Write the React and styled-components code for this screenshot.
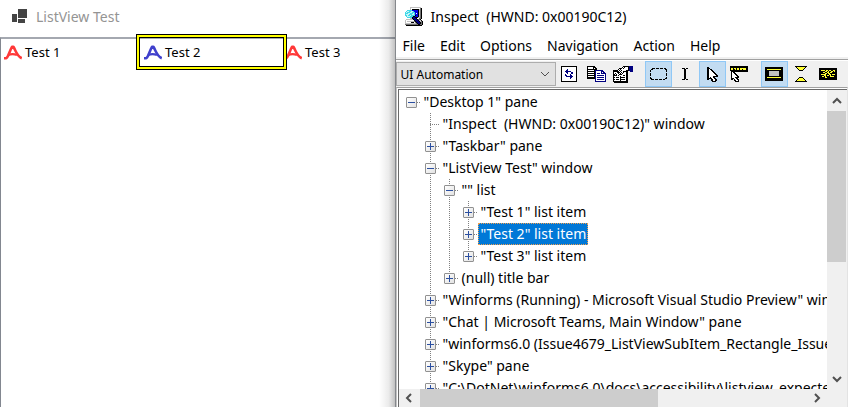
import React from "react";
import styled, { createGlobalStyle, css } from "styled-components";

const GlobalStyle = createGlobalStyle`
  * { box-sizing: border-box; }
  body { margin: 0; background: #fff; font-family: "Noto Sans", "Open Sans", sans-serif; font-size: 14px; color: #000; }
  button, select { font: inherit; color: inherit; border: 0; margin: 0; padding: 0; background: none; border-radius: 0; }
  ul { list-style: none; margin: 0; padding: 0; }
  h1 { margin: 0; font-size: inherit; font-weight: 400; }
`;

const Desktop = styled.main`
  display: flex;
  height: 100vh;
  padding-bottom: 7px;
  overflow: hidden;
`;

/* ---------- ListView window ---------- */

const ListWindow = styled.section`
  flex: 395 1 0;
  min-width: 0;
  display: flex;
  flex-direction: column;
  position: relative;
  &::after {
    content: "";
    position: absolute;
    inset: 0 0 0 auto;
    width: 16px;
    background: linear-gradient(to right, transparent, rgba(0, 0, 0, 0.08) 60%, rgba(0, 0, 0, 0.24));
    pointer-events: none;
  }
`;

const ListTitle = styled.header`
  height: 37px;
  padding: 0 0 4px 12px;
  display: flex;
  align-items: center;
  gap: 8px;
  color: #949494;
`;

const ListBody = styled.ul`
  flex: 1;
  border-top: 2px solid #a4a8b0;
  border-left: 1px solid #828790;
  padding-left: 3px;
  display: grid;
  grid-template-columns: 140px 140px auto;
  align-content: start;
  justify-content: start;
`;

const ListItem = styled.li`
  position: relative;
  display: flex;
  align-items: center;
  gap: 3px;
  height: 26px;
  font-size: 13px;
  white-space: nowrap;
  z-index: ${(p) => (p.$raised ? 1 : 0)};
`;

const HighlightFrame = styled.span`
  position: absolute;
  top: -5px;
  left: -8px;
  width: 151px;
  height: 36px;
  border: 1px solid #000;
  pointer-events: none;
  &::before {
    content: "";
    position: absolute;
    inset: 0;
    border: 2px solid #ff0;
  }
  &::after {
    content: "";
    position: absolute;
    inset: 2px;
    border: 1px solid #000;
  }
`;

/* ---------- Inspect window ---------- */

const InspectWindow = styled.section`
  flex: 453 1 0;
  min-width: 0;
  display: flex;
  flex-direction: column;
  border-left: 1px solid #85888c;
  background: #fff;
`;

const InspectTitle = styled.header`
  height: 32px;
  padding-left: 8px;
  display: flex;
  align-items: center;
  gap: 7px;
  white-space: pre;
`;

const MenuBar = styled.nav`
  height: 27px;
  padding: 2px 0 0 7px;
  display: flex;
  gap: 15px;
  align-items: center;
  border-bottom: 2px solid #f0f0f0;
`;

const ToolBar = styled.div`
  height: 28px;
  display: flex;
  align-items: center;
  background: #f0f0f0;
  border-top: 1px solid #a0a0a0;
  box-shadow: inset 0 1px #fff;
  padding-top: 1px;
`;

const ComboWrap = styled.div`
  width: 160px;
  height: 24px;
  border: 1px solid #adadad;
  background: #e1e1e1;
  display: flex;
  align-items: center;
  svg { margin-left: -16px; pointer-events: none; }
`;

const Combo = styled.select`
  appearance: none;
  width: 100%;
  height: 22px;
  padding-left: 4px;
  font-size: 12px;
`;

const ToolGroup = styled.div`
  display: flex;
  margin-right: 8px;
  &:last-child { margin-right: 0; }
`;

const ToolButton = styled.button`
  width: 27px;
  height: 26px;
  display: flex;
  align-items: center;
  justify-content: center;
  ${(p) => p.$active && css`
    background: #c2dcf2;
    border: 1px solid #90c8f6;
  `}
`;

const TreeFrame = styled.div`
  flex: 1;
  min-height: 0;
  border-top: 1px solid #a0a0a0;
  border-left: 1px solid #c4c4c4;
  border-right: 1px solid #e3e3e3;
  padding: 1px 0 0 1px;
  display: flex;
`;

const TreeGrid = styled.div`
  flex: 1;
  min-width: 0;
  border-top: 1px solid #696969;
  border-left: 1px solid #696969;
  display: grid;
  grid-template: minmax(0, 1fr) 18px / minmax(0, 1fr) 20px;
  background: #f0f0f0;
`;

const Tree = styled.ul`
  background: #fff;
  overflow: hidden;
  padding: 1px 0 0 3px;
`;

const TreeRow = styled.li`
  height: 22px;
  display: flex;
  align-items: center;
  white-space: pre;
`;

const dots = (dir) =>
  `repeating-linear-gradient(to ${dir}, #808080 0 1px, transparent 1px 2px)`;

const Guide = styled.span`
  flex: none;
  width: 19px;
  height: 22px;
  display: flex;
  align-items: center;
  padding-left: 4px;
  background-image:
    ${(p) => (p.$line === "none" ? "none" : dots("bottom"))},
    ${(p) => (p.$branch ? dots("right") : "none")};
  background-repeat: no-repeat;
  background-position: 9px 0, 9px 11px;
  background-size: 1px ${(p) => (p.$line === "end" ? "12px" : "22px")}, 10px 1px;
`;

const Toggle = styled.button`
  width: 11px;
  height: 11px;
  border: 1px solid #919191;
  border-radius: 1px;
  background: linear-gradient(135deg, #fff, #e2e2e2);
  display: flex;
`;

const NodeLabel = styled.span`
  height: 22px;
  line-height: 20px;
  border: 1px dotted transparent;
  padding: 0 1px 0 2px;
  ${(p) => p.$selected && css`
    background: #0078d7;
    color: #fff;
    border-color: #f0a050;
  `}
`;

const ScrollTrack = styled.div`
  display: flex;
  flex-direction: ${(p) => (p.$vertical ? "column" : "row")};
  background: #f0f0f0;
`;

const ScrollButton = styled.button`
  flex: none;
  width: 21px;
  height: 18px;
  display: flex;
  align-items: center;
  justify-content: center;
  ${(p) => p.$vertical && css`
    width: 19px;
    height: 21px;
  `}
`;

const ScrollThumb = styled.div`
  background: #cdcdcd;
  flex: ${(p) => p.$size} 1 0;
  ${(p) => p.$vertical && "width: 19px;"}
`;

const ScrollSpace = styled.div`
  flex: ${(p) => p.$size} 1 0;
`;

/* ---------- Icons ---------- */

const palette = { k: "#000", n: "#000080", w: "#fff", y: "#ffff30", g: "#c0c0c0", s: "#707070", b: "#0000e0", c: "#40d8e8", l: "#c8f4f8" };

function PixelIcon({ rows }) {
  const width = Math.max(...rows.map((r) => r.length));
  const runs = [];
  rows.forEach((row, y) => {
    for (let x = 0; x < row.length; ) {
      let end = x + 1;
      while (row[end] === row[x]) end++;
      if (palette[row[x]]) runs.push([x, y, end - x, palette[row[x]]]);
      x = end;
    }
  });
  return (
    <svg width={width} height={rows.length} shapeRendering="crispEdges" aria-hidden="true">
      {runs.map(([x, y, w, fill]) => (
        <rect key={`${x}-${y}`} x={x} y={y} width={w} height="1" fill={fill} />
      ))}
    </svg>
  );
}

const bitmaps = {
  inspect: [
    "......ggggggggggg...",
    "......gwwwwwwwwwsk..",
    "......gwkkkkkkkgsk..",
    "...cccccbbbbbbkgsk..",
    "..cllccllcbbbbkgsk..",
    ".clcccllcccbbbkgsk..",
    ".cccllccclcbwbkgsk..",
    ".clllcccllcbbbkgsk..",
    ".cclcclcccckbbkgsk..",
    "..clllccckkbbbkgsk..",
    "...cccccknnkkkggsk..",
    "......ggknnnkwwssk..",
    "..gggggggknnnkssk...",
    ".gwwwwwwwwknnnkggk..",
    ".gwgggggggsknnnkgsk.",
    ".gwwwwwkkkwsknnnksk.",
    ".gggggggggggsknnksk.",
    ".ssssssssssssskkssk.",
    "..kkkkkkkkkkkkkkkk..",
  ],
  refresh: [
    "kkkkkkkkkkkkkkkk",
    "kwwwwwwwwwwwwwwk",
    "kwwwwwwwwwwwwwwk",
    "kwwwwwnwwwwwwwwk",
    "kwwwwnnwwwwwwwwk",
    "kwwwnnnnnnwwwwwk",
    "kwwwwnnwwwnnwwwk",
    "kwwwwwnwwwnnwwwk",
    "kwwwnwwwwnwwwwwk",
    "kwwwnnwwwnnwwwwk",
    "kwwwwnnnnnnnwwwk",
    "kwwwwwwwwnnwwwwk",
    "kwwwwwwwwnwwwwwk",
    "kwwwwwwwwwwwwwwk",
    "kwwwwwwwwwwwwwwk",
    "kkkkkkkkkkkkkkkk",
  ],
  copy: [
    "kkkkkkkk...........",
    "kwwwwwkkk..........",
    "kwwwwwkwkk.........",
    "kkkkkkkkkk.........",
    "kwwwwwwknnnnnnnn...",
    "kkkkkkkknwwwwwnnn..",
    "kwwwwwwknwwwwwnwnn.",
    "kkkkkkkknwnnnwnnnnn",
    "kwwwwwwknwwwwwwwwwn",
    "kkkkkkkknwnnnnnnnwn",
    "kwwwwwwknwwwwwwwwwn",
    "kkkkkkkknwnnnnnnnwn",
    "kkkkkkkknwwwwwwwwwn",
    "........nwnnnnnnnwn",
    "........nwwwwwwwwwn",
    "........nnnnnnnnnnn",
  ],
  properties: [
    "..........kkkkkknnnn",
    ".........kwkwwwknnnn",
    "......kkkwkwwwwknnnn",
    ".....kwkwwwwwwwknnnn",
    "kkkkkwkwkwwwwkkknnnn",
    "kkkkkkwkwwkkkkk..nnn",
    "kwwwkkkwkwkwwkk.....",
    "kwkwwkwkwkwwwkk.....",
    "kkwkwwkkkwwwwkk.....",
    "kkkkwkwwwwkkwkk.....",
    "kwwwwwwkwwwwwkk.....",
    "kkwkkkwkkkkkwkk.....",
    "kwwwwwwkwwwwwkk.....",
    "kkwkkkwkkkkkwkk.....",
    "kwwwwwwkwwwwwkk.....",
    "kkkkkkkkkkkkkkk.....",
    ".kkkkkkkkkkkkkk.....",
  ],
  marquee: [
    "..kkk.kkk.kkk.kk.",
    ".kk............kk",
    "k...............k",
    "k...............k",
    ".................",
    "k...............k",
    "k...............k",
    "k...............k",
    ".................",
    "k...............k",
    "kk.............kk",
    ".kkk.kkk.kkk.kk..",
  ],
  ibeam: [
    "kkk.kk",
    "..kk..",
    "..kk..",
    "..kk..",
    "..kk..",
    "..kk..",
    "..kk..",
    "..kk..",
    "..kk..",
    "..kk..",
    "..kk..",
    "kkk.kk",
  ],
  cursor: [
    "kk.........",
    "kkk........",
    "kkwkk......",
    "kkwwkk.....",
    "kkwwwkk....",
    "kkwwwwkk...",
    "kkwwwwwkk..",
    "kkwwwwwwkk.",
    "kkwwwwwwwkk",
    "kkwwwwkkkkk",
    "kkwkwwkk...",
    "kkkkkwwkk..",
    "kk..kkwwkk.",
    "....kkwwkk.",
    ".....kkkk..",
  ],
  cursorBar: [
    "kkkkkkkkkkkkkkkkkk",
    "kkkkkkkkkkkkkkkkkk",
    "kyykyykyykyyyyyykk",
    "kyykkykyykyykyyykk",
    "kkkkkkkkkkkkkkkkkk",
    ".kkkkkkkkkkkkkkkkk",
    ".kwkk.............",
    ".kwwkk............",
    ".kwwwkk...........",
    ".kwwwwkk..........",
    ".kwwwwwkk.........",
    ".kwwwkkkk.........",
    ".kkkwwkk..........",
    ".kk.kwwkk.........",
    "....kkwwk.........",
    ".....kkkk.........",
  ],
  rectangle: [
    "kkkkkkkkkkkkkkkkkk",
    "kkkkkkkkkkkkkkkkkk",
    "kkyyyyyyyyyyyyyykk",
    "kkkkkkkkkkkkkkkkkk",
    "kkkkggggggggggkkkk",
    "kkkkggggggggggkkkk",
    "kkkkggggggggggkkkk",
    "kkkkggggggggggkkkk",
    "kkkkggggggggggkkkk",
    "kkkkkkkkkkkkkkkkkk",
    "kkyyyyyyyyyyyyyykk",
    "kkkkkkkkkkkkkkkkkk",
    "kkkkkkkkkkkkkkkkkk",
    "kkkkkkkkkkkkkkkkkk",
  ],
  hourglass: [
    "kkkkkkkkkkkk",
    ".kyyyyyyyyk.",
    "..kyyyyyyk..",
    "...kyyyyk...",
    "....kkkk....",
    "............",
    "............",
    "............",
    "............",
    "............",
    "............",
    "....kkkk....",
    "...kyyyyk...",
    "..kyyyyyyk..",
    ".kyyyyyyyyk.",
    "kkkkkkkkkkkk",
  ],
  caption: [
    "kkkkkkkkkkkkkkkkkk",
    "kkkkkkkkkkkkkkkkkk",
    "kkyyyykyykyykkyykk",
    "kkkkkkyykykkyykykk",
    "kkkkyykkyykyykkkkk",
    "kkkkkkyykyykkkkkkk",
    "kkyyyyykkkyykyyykk",
    "kkkkkyykyykykkkkkk",
    "kkkyykykkkkyyyykkk",
    "kkkkkkyykkkkkkkkkk",
    "kkkkkkkkkkkkkkkkkk",
    "kkkkkkkkkkkkkkkkkk",
  ],
};

const FormIcon = () => (
  <svg width="16" height="15" viewBox="0 0 16 15" shapeRendering="crispEdges" fill="#444" aria-hidden="true">
    <rect x="6" width="9" height="9" />
    <rect y="5" width="5" height="8" />
    <rect x="6" y="10" width="7" height="4" />
  </svg>
);

const LogoIcon = ({ color }) => (
  <svg width="18" height="15" viewBox="0 0 18 15" fill="none" stroke={color} strokeWidth="2.6" strokeLinejoin="round" aria-hidden="true">
    <path d="M0 13.2H2C4.4 12.6 5 7 8 1.8H9.4C12 6 12.6 11 17.8 13.2" />
    <path d="M4.2 10C7 8.8 10 8.8 13 10" strokeWidth="2.4" />
  </svg>
);

const ToggleSign = ({ open }) => (
  <svg width="9" height="9" shapeRendering="crispEdges" aria-hidden="true">
    <path d={open ? "M1 4h7v1H1z" : "M1 4h7v1H1zM4 1h1v7H4z"} fill="#2b4fa0" />
  </svg>
);

const turns = { down: 0, left: 90, up: 180, right: 270 };
const Chevron = ({ to, color = "#505050", weight = 2 }) => (
  <svg width="12" height="12" viewBox="0 0 12 12" fill="none" stroke={color} strokeWidth={weight} aria-hidden="true">
    <path d="M2 4l4 4 4-4" transform={`rotate(${turns[to]} 6 6)`} />
  </svg>
);

/* ---------- Data ---------- */

const items = [
  { label: "Test 1", color: "#ff3838" },
  { label: "Test 2", color: "#4040cc", highlighted: true },
  { label: "Test 3", color: "#ff3838" },
];

const menus = ["File", "Edit", "Options", "Navigation", "Action", "Help"];

const tools = [
  [["refresh", "Refresh"], ["copy", "Copy"], ["properties", "Properties"]],
  [["marquee", "Watch focus", true], ["ibeam", "Watch caret"], ["cursor", "Watch cursor", true], ["cursorBar", "Watch tooltip"]],
  [["rectangle", "Show highlight rectangle", true], ["hourglass", "Show caret"], ["caption", "Show tooltip"]],
];

// guides: one entry per ancestor column plus the node's own column
const nodes = [
  { label: '"Desktop 1" pane', guides: ["none"], open: true },
  { label: '"Inspect  (HWND: 0x00190C12)" window', guides: ["none", "full"], leaf: true },
  { label: '"Taskbar" pane', guides: ["none", "full"] },
  { label: '"ListView Test" window', guides: ["none", "full"], open: true },
  { label: '"" list', guides: ["none", "full", "full"], open: true },
  { label: '"Test 1" list item', guides: ["none", "full", "full", "full"] },
  { label: '"Test 2" list item', guides: ["none", "full", "full", "full"], selected: true },
  { label: '"Test 3" list item', guides: ["none", "full", "full", "end"] },
  { label: "(null) title bar", guides: ["none", "full", "end"] },
  { label: '"Winforms (Running) - Microsoft Visual Studio Preview" window', guides: ["none", "full"] },
  { label: '"Chat | Microsoft Teams, Main Window" pane', guides: ["none", "full"] },
  { label: '"winforms6.0 (Issue4679_ListViewSubItem_Rectangle_Issue)', guides: ["none", "full"] },
  { label: '"Skype" pane', guides: ["none", "full"] },
  { label: '"C:\\DotNet\\winforms6.0\\docs\\accessibility\\listview_expected', guides: ["none", "full"] },
];

function TreeNode({ label, guides, open, leaf, selected }) {
  return (
    <TreeRow role="treeitem" aria-level={guides.length} aria-selected={!!selected} aria-expanded={leaf ? undefined : !!open}>
      {guides.map((line, i) => {
        const own = i === guides.length - 1;
        return (
          <Guide key={i} $line={line} $branch={own}>
            {own && !leaf && (
              <Toggle aria-label={`${open ? "Collapse" : "Expand"} ${label}`}>
                <ToggleSign open={open} />
              </Toggle>
            )}
          </Guide>
        );
      })}
      <NodeLabel $selected={selected}>{label}</NodeLabel>
    </TreeRow>
  );
}

export default function App() {
  return (
    <>
      <GlobalStyle />
      <Desktop>
        <ListWindow aria-label="ListView Test">
          <ListTitle>
            <FormIcon />
            <h1>ListView Test</h1>
          </ListTitle>
          <ListBody>
            {items.map((item) => (
              <ListItem key={item.label} $raised={item.highlighted}>
                <LogoIcon color={item.color} />
                {item.label}
                {item.highlighted && <HighlightFrame />}
              </ListItem>
            ))}
          </ListBody>
        </ListWindow>

        <InspectWindow aria-label="Inspect">
          <InspectTitle>
            <PixelIcon rows={bitmaps.inspect} />
            <h1>Inspect  (HWND: 0x00190C12)</h1>
          </InspectTitle>
          <MenuBar>
            {menus.map((menu) => (
              <button key={menu}>{menu}</button>
            ))}
          </MenuBar>
          <ToolBar role="toolbar">
            <ComboWrap>
              <Combo aria-label="Inspection mode" defaultValue="UI Automation">
                <option>UI Automation</option>
              </Combo>
              <Chevron to="down" weight={1} />
            </ComboWrap>
            {tools.map((group, i) => (
              <ToolGroup key={i}>
                {group.map(([icon, label, active]) => (
                  <ToolButton key={icon} $active={active} aria-label={label} aria-pressed={!!active}>
                    <PixelIcon rows={bitmaps[icon]} />
                  </ToolButton>
                ))}
              </ToolGroup>
            ))}
          </ToolBar>
          <TreeFrame>
            <TreeGrid>
              <Tree role="tree">
                {nodes.map((node) => (
                  <TreeNode key={node.label} {...node} />
                ))}
              </Tree>
              <ScrollTrack $vertical>
                <ScrollButton $vertical aria-label="Scroll up"><Chevron to="up" /></ScrollButton>
                <ScrollThumb $vertical $size={151} />
                <ScrollSpace $size={106} />
                <ScrollButton $vertical aria-label="Scroll down"><Chevron to="down" /></ScrollButton>
              </ScrollTrack>
              <ScrollTrack>
                <ScrollButton aria-label="Scroll left"><Chevron to="left" /></ScrollButton>
                <ScrollThumb $size={238} />
                <ScrollSpace $size={148} />
                <ScrollButton aria-label="Scroll right"><Chevron to="right" /></ScrollButton>
              </ScrollTrack>
            </TreeGrid>
          </TreeFrame>
        </InspectWindow>
      </Desktop>
    </>
  );
}
